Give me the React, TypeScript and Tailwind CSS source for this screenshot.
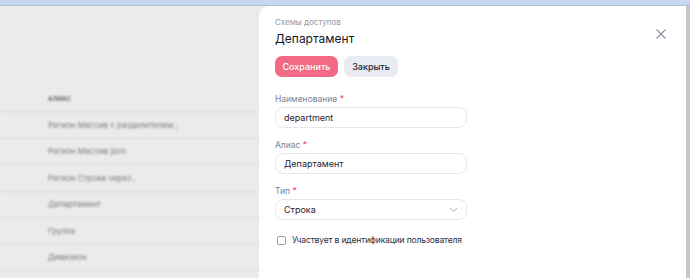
import { useState } from "react";

const rows = [
	"Регион Массив с разделителем ;",
	"Регион Массив json",
	"Регион Строка через ,",
	"Департамент",
	"Группа",
	"Дивизион",
];

function Field({ label, value }: { label: string; value: string }) {
	return (
		<div className="flex flex-col gap-[2px]">
			<div className="text-[8.5px] leading-[12px] text-[#7d8290]">
				{label} <span className="text-[#f0506e]">*</span>
			</div>
			<div className="h-[21px] w-[192px] rounded-[8px] border border-[#e6e7ee] bg-white px-[8px] flex items-center text-[9px] text-[#1f2430]">
				{value}
			</div>
		</div>
	);
}

export default function App() {
	const [checked, setChecked] = useState(false);

	return (
		<div
			className="w-[690px] h-[278px] flex flex-col overflow-hidden bg-[#ebebeb]"
			style={{ fontFamily: "Inter, 'Noto Sans', sans-serif" }}
		>
			{/* top strip */}
			<div className="h-[6px] shrink-0 bg-[#c8d7ef] border-b border-[#aebfdb]" />

			<div className="flex flex-1 min-h-0">
				{/* Blurred table behind */}
				<div className="flex-1 flex flex-col pt-[80px] blur-[0.9px]">
					<div className="h-[26px] border-b border-[#d9d9d9] flex items-center pl-[48px] text-[6px] font-semibold uppercase tracking-wide text-[#555]">
						алиас
					</div>
					{rows.map((r) => (
						<div
							key={r}
							className="h-[26.5px] border-b border-[#d9d9d9] flex items-center pl-[48px] text-[8px] text-[#7a7a7a]"
						>
							{r}
						</div>
					))}
				</div>

				{/* Side panel */}
				<div className="w-[427px] bg-white rounded-tl-[10px] flex flex-col pl-[16px] pr-[20px] pt-[10px]">
					<div className="flex justify-between items-start">
						<div className="flex flex-col">
							<div className="text-[8px] leading-[12px] text-[#9499a6]">Схемы доступов</div>
							<div className="mt-[3px] text-[12px] leading-[16px] text-[#15171c]">
								Департамент
							</div>
						</div>
						<button className="mt-[13px] text-[#8790a3]">
							<svg width="10" height="10" viewBox="0 0 10 10" fill="none" stroke="currentColor" strokeWidth="1.1">
								<path d="M0.5 0.5L9.5 9.5M9.5 0.5L0.5 9.5" />
							</svg>
						</button>
					</div>

					<div className="mt-[9px] flex gap-[6px]">
						<button className="h-[21px] w-[63px] rounded-[7px] bg-[#f26a84] text-white text-[9px] font-medium">
							Сохранить
						</button>
						<button className="h-[21px] w-[54px] rounded-[7px] bg-[#e8ebf1] text-[#1f2430] text-[9px] font-medium">
							Закрыть
						</button>
					</div>

					<div className="mt-[16px] flex flex-col gap-[11px]">
						<Field label="Наименование" value="department" />
						<Field label="Алиас" value="Департамент" />
						<div className="flex flex-col gap-[2px]">
							<div className="text-[8.5px] leading-[12px] text-[#7d8290]">
								Тип <span className="text-[#f0506e]">*</span>
							</div>
							<div className="h-[21px] w-[192px] rounded-[8px] border border-[#e6e7ee] bg-white pl-[8px] pr-[8px] flex items-center justify-between text-[9px] text-[#1f2430]">
								<span>Строка</span>
								<svg width="9" height="6" viewBox="0 0 9 6" fill="none" stroke="#a3a9b7" strokeWidth="1">
									<path d="M1 1.2L4.5 4.5L8 1.2" />
								</svg>
							</div>
						</div>
					</div>

					<label className="mt-[14px] flex items-center gap-[6px] text-[8.5px] tracking-[-0.15px] text-[#2a2e38] cursor-pointer">
						<span
							onClick={() => setChecked(!checked)}
							className={`ml-[2px] w-[9px] h-[9px] rounded-[2px] border ${checked ? "bg-[#f26a84] border-[#f26a84]" : "border-[#9ba1ae] bg-white"}`}
						/>
						Участвует в идентификации пользователя
					</label>
				</div>

				{/* scrollbar edge */}
				<div className="w-[4px] bg-[#c6c6c6]" />
			</div>
		</div>
	);
}
